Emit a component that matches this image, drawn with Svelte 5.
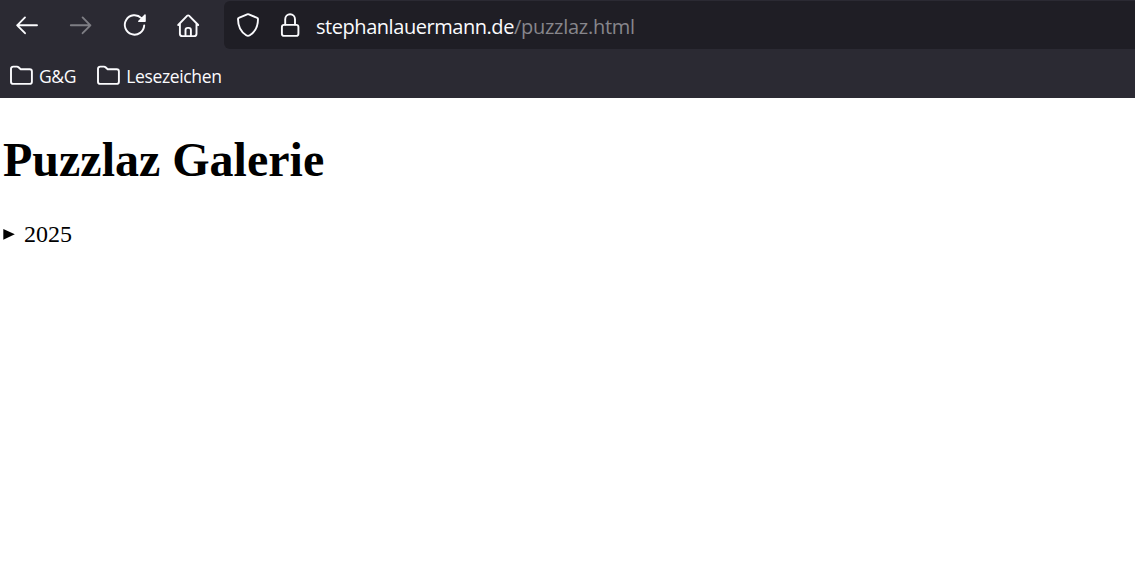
<script>
  const host = 'stephanlauermann.de';
  const path = '/puzzlaz.html';
  const bookmarks = ['G&G', 'Lesezeichen'];

  let open = $state(false);
</script>

<div class="browser">
  <header class="chrome">
    <div class="toolbar">
      <nav class="nav">
        <button class="nav-btn" aria-label="Zurück">
          <svg class="icon" width="28" height="28" viewBox="0 0 28 28">
            <path d="M12 6.4 4.200 14.300l7.800 7.900M4.200 14.300h19.800" />
          </svg>
        </button>
        <button class="nav-btn" aria-label="Vor" disabled>
          <svg class="icon" width="28" height="28" viewBox="0 0 28 28">
            <path d="M15.600 6.400 23.400 14.300l-7.800 7.900M23.400 14.300H3.800" />
          </svg>
        </button>
        <button class="nav-btn" aria-label="Neu laden">
          <svg class="icon" width="28" height="28" viewBox="0 0 28 28">
            <path d="M23.200 14.400A9.700 9.700 0 1 1 20.400 7.100" />
            <path class="solid" d="M24.800 4v6.200a.8.8 0 0 1-.8.8h-6.200c-.7 0-1-.8-.5-1.300l6.200-6.200c.5-.5 1.300-.1 1.300.5z" />
          </svg>
        </button>
        <button class="nav-btn" aria-label="Startseite">
          <svg class="icon" width="28" height="28" viewBox="0 0 28 28">
            <path d="m3.200 14 9.100-9.300a1.200 1.200 0 0 1 1.700 0l9.200 9.300M4.900 12.500v10.200a2.400 2.400 0 0 0 2.400 2.400h11.800a2.400 2.400 0 0 0 2.400-2.400V12.500M10.500 25v-5.800a2.300 2.300 0 0 1 2.300-2.300h.8a2.300 2.300 0 0 1 2.300 2.300V25" />
          </svg>
        </button>
      </nav>

      <div class="urlbar">
        <svg class="icon" width="28" height="28" viewBox="0 0 28 28">
          <path d="M13.200 3.300a2 2 0 0 1 1.600 0l8.400 3.600a1.200 1.200 0 0 1 .8 1.200c0 6.800-2.600 12.700-8.200 16.200a3.400 3.400 0 0 1-3.600 0C6.600 20.800 4 14.900 4 8.100a1.200 1.200 0 0 1 .8-1.200z" />
        </svg>
        <svg class="icon lock" width="28" height="28" viewBox="0 0 28 28">
          <rect x="5.900" y="13.900" width="16.500" height="11" rx="2.200" />
          <path d="M9.200 13.600V8.200a4.900 4.900 0 0 1 9.800 0v5.400" />
        </svg>
        <span class="url"><span class="host">{host}</span><span class="path">{path}</span></span>
      </div>
    </div>

    <div class="bookmarks">
      {#each bookmarks as name}
        <div class="bookmark">
          <svg class="icon" width="24" height="22" viewBox="0 0 24 22">
            <path d="M2 16.700V3.800a2.200 2.200 0 0 1 2.200-2.200h3.700a2.200 2.200 0 0 1 1.600.6l2.200 2.100h9a2.200 2.200 0 0 1 2.200 2.200v10.200a2.200 2.200 0 0 1-2.200 2.200H4.200a2.200 2.200 0 0 1-2.200-2.200z" />
          </svg>
          <span class="label">{name}</span>
        </div>
      {/each}
    </div>
  </header>

  <main class="page">
    <h1>Puzzlaz Galerie</h1>
    <button class="summary" aria-expanded={open} onclick={() => (open = !open)}>
      <svg class="marker" class:open width="12" height="12" viewBox="0 0 12 12">
        <path d="M.3.900v10.800L11.800 6.300z" />
      </svg>
      <span>2025</span>
    </button>
  </main>
</div>

<style>
  :global(body) {
    margin: 0;
    background: #fff;
  }

  .browser {
    height: 583px;
    overflow: hidden;
  }

  .chrome {
    box-sizing: border-box;
    height: 98px;
    background: #2b2a33;
    color: #fbfbfe;
    font-family: "Open Sans", "Noto Sans", sans-serif;
  }

  .toolbar {
    display: flex;
    height: 49px;
    padding-top: 1px;
    box-sizing: border-box;
  }

  .nav {
    display: flex;
    align-items: center;
    width: 211px;
    padding-left: 13px;
    gap: 26px;
    height: 48px;
  }

  .nav-btn {
    display: flex;
    padding: 0;
    border: 0;
    background: none;
    color: inherit;
  }

  .nav-btn:disabled {
    opacity: 0.4;
  }

  .icon {
    display: block;
    flex: none;
    fill: none;
    stroke: currentColor;
    stroke-width: 1.9;
    stroke-linecap: round;
    stroke-linejoin: round;
  }

  .icon .solid {
    fill: currentColor;
    stroke: none;
  }

  .urlbar {
    display: flex;
    align-items: center;
    flex: 1;
    padding-left: 10px;
    border-radius: 6px 0 0 6px;
    background: #1f1e25;
  }

  .lock {
    margin-left: 14px;
  }

  .url {
    display: flex;
    margin-left: 12px;
    padding-top: 3px;
    font-size: 20px;
    line-height: 28px;
    white-space: nowrap;
  }

  .host {
    letter-spacing: -0.45px;
  }

  .path {
    color: #87868c;
    letter-spacing: -0.26px;
  }

  .bookmarks {
    display: flex;
    align-items: center;
    gap: 19px;
    height: 49px;
    padding: 4px 0 0 9px;
    box-sizing: border-box;
  }

  .bookmark {
    display: flex;
    align-items: center;
    gap: 6px;
    font-size: 17.5px;
    line-height: 24px;
  }

  .label {
    padding: 1px 1px 0 0;
    letter-spacing: -0.35px;
  }

  .page {
    padding: 33px 3px 0;
    color: #000;
    font-family: "Liberation Serif", "Times New Roman", serif;
  }

  h1 {
    margin: 0;
    font-size: 48px;
    line-height: 58px;
    font-weight: bold;
  }

  .summary {
    display: flex;
    align-items: center;
    gap: 9px;
    margin-top: 31px;
    padding: 0;
    border: 0;
    background: none;
    color: inherit;
    font: 24px/28px "Liberation Serif", "Times New Roman", serif;
  }

  .marker {
    fill: currentColor;
  }

  .marker.open {
    transform: rotate(90deg);
  }
</style>
